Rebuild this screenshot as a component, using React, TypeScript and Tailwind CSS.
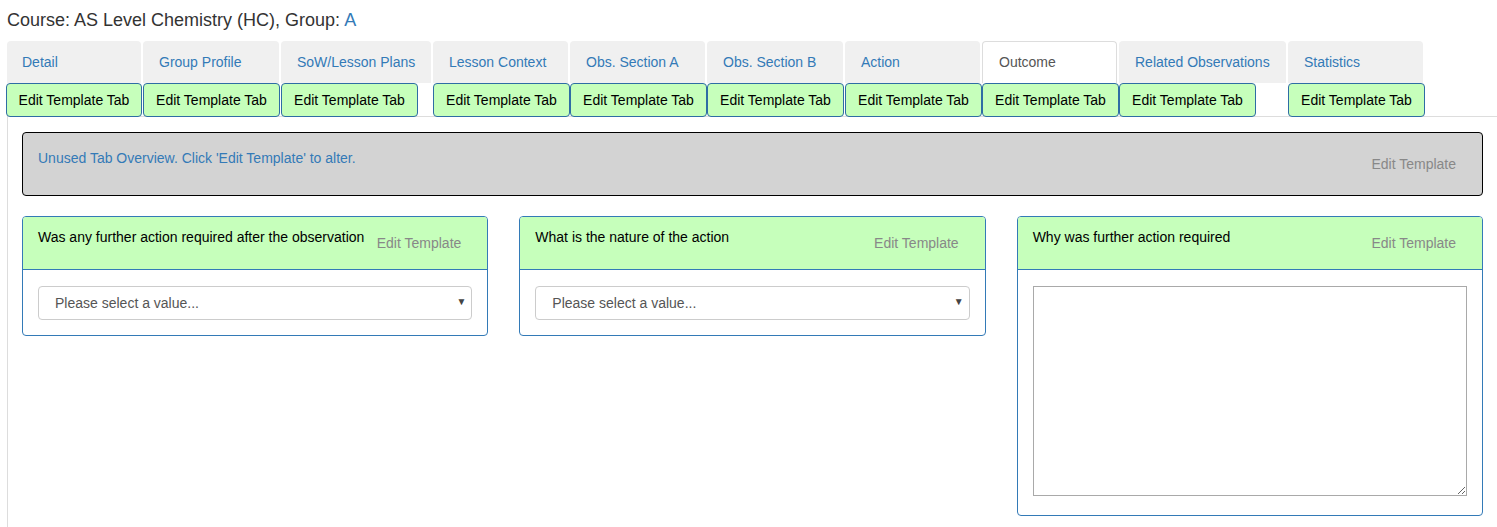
import React from 'react';

const tabs = [
  { label: 'Detail', w: 'w-[134px]' },
  { label: 'Group Profile', w: 'w-[136px]' },
  { label: 'SoW/Lesson Plans', w: 'w-[150px]' },
  { label: 'Lesson Context', w: 'w-[135px]' },
  { label: 'Obs. Section A', w: 'w-[135px]' },
  { label: 'Obs. Section B', w: 'w-[136px]' },
  { label: 'Action', w: 'w-[135px]' },
  { label: 'Outcome', w: 'w-[135px]', active: true },
  { label: 'Related Observations', w: 'w-[167px]' },
  { label: 'Statistics', w: 'w-[135px]' },
];

function PanelHeader({ title }: { title: string }) {
  return (
    <div className="h-[53px] bg-[#c6ffbb] border-b border-[#337ab7] flex justify-between items-start pl-[15px] pr-[26px] pt-[10px] rounded-t-[3px]">
      <span className="text-[14px] leading-[20px] text-black">{title}</span>
      <span className="text-[14px] leading-[20px] text-[#888] mt-[6px] ml-[10px] whitespace-nowrap">Edit Template</span>
    </div>
  );
}

function SelectPanel({ title }: { title: string }) {
  return (
    <div className="border border-[#337ab7] rounded-[4px] bg-white">
      <PanelHeader title={title} />
      <div className="pt-[16px] px-[15px] pb-[15px]">
        <div className="relative">
          <select className="appearance-none w-full h-[34px] border border-[#ccc] rounded-[4px] pl-[16px] text-[14px] text-[#555] bg-white outline-none">
            <option>Please select a value...</option>
          </select>
          <span className="absolute right-[6px] top-[8px] text-[10px] text-[#444] pointer-events-none">▼</span>
        </div>
      </div>
    </div>
  );
}

export default function App() {
  return (
    <div className="font-['Liberation_Sans',Arial,sans-serif] pl-[7px] bg-white min-h-screen">
      <h4 className="text-[18px] leading-[20px] pt-[10px] text-[#333]">
        Course: AS Level Chemistry (HC), Group: <span className="text-[#337ab7]">A</span>
      </h4>

      <div className="mt-[11px] flex border-b border-[#ddd]">
        {tabs.map((t, i) => (
          <div key={t.label} className={`${t.w} mr-[2px] -mb-px flex flex-col shrink-0 relative z-10`}>
            <div
              className={`${i === 0 ? 'pl-[15px]' : 'pl-[16px]'} ${
                t.active
                  ? 'bg-white border border-b-0 border-[#ddd] text-[#555]'
                  : 'bg-[#f0f0f0] text-[#337ab7]'
              } h-[42px] rounded-t-[4px] flex items-center text-[14px]`}
            >
              {t.label}
            </div>
            <button
              className={`${i === 0 ? '-ml-px w-[136px]' : 'w-[137px]'} h-[34px] shrink-0 bg-[#c6ffbb] border border-[#2e6da4] rounded-[4px] text-[14px] text-black`}
            >
              Edit Template Tab
            </button>
          </div>
        ))}
      </div>

      <div className="border-l border-[#ddd] pl-[14px] pr-[14px] pt-[15px] pb-[12px]">
        <div className="h-[64px] bg-[#d3d3d3] border border-black rounded-[4px] flex justify-between items-start pl-[15px] pr-[26px] pt-[15px]">
          <span className="text-[14px] leading-[20px] text-[#337ab7]">
            Unused Tab Overview. Click 'Edit Template' to alter.
          </span>
          <span className="text-[14px] leading-[20px] text-[#888] mt-[6px]">Edit Template</span>
        </div>

        <div className="mt-[20px] grid grid-cols-3 gap-[31px] items-start">
          <SelectPanel title="Was any further action required after the observation" />
          <SelectPanel title="What is the nature of the action" />
          <div className="border border-[#337ab7] rounded-[4px] bg-white">
            <PanelHeader title="Why was further action required" />
            <div className="pt-[16px] px-[15px] pb-[19px]">
              <textarea className="block w-full h-[210px] border border-[#a9a9a9] outline-none" />
            </div>
          </div>
        </div>
      </div>
    </div>
  );
}
